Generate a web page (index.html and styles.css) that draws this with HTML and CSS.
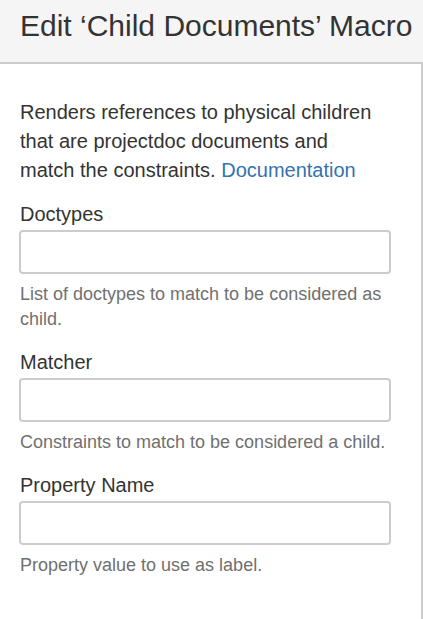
FILE: index.html
```html
<!DOCTYPE html>
<html>
<head>
<meta charset="utf-8">
<link rel="stylesheet" href="styles.css">
</head>
<body>
<div class="dialog">
  <header class="header">Edit ‘Child Documents’ Macro</header>
  <main class="content">
    <p class="intro">Renders references to physical children that are projectdoc documents and match the constraints. <a class="link" href="#">Documentation</a></p>
    <div class="field">
      <label class="label">Doctypes</label>
      <input class="input" type="text">
      <div class="help">List of doctypes to match to be considered as child.</div>
    </div>
    <div class="field">
      <label class="label">Matcher</label>
      <input class="input" type="text">
      <div class="help">Constraints to match to be considered a child.</div>
    </div>
    <div class="field">
      <label class="label">Property Name</label>
      <input class="input" type="text">
      <div class="help">Property value to use as label.</div>
    </div>
  </main>
</div>
</body>
</html>
```
FILE: styles.css
```css
html, body {
  margin: 0;
  padding: 0;
  background: #ffffff;
}
body {
  font-family: "Liberation Sans", Arial, sans-serif;
  color: #333333;
}
.dialog {
  width: 423px;
  height: 619px;
  display: flex;
  flex-direction: column;
  overflow: hidden;
}
.header {
  height: 64px;
  box-sizing: border-box;
  padding: 0 20px 12px;
  line-height: 52px;
  font-size: 30px;
  background: #f5f5f5;
  border-bottom: 2px solid #cccccc;
  white-space: nowrap;
  color: #333333;
}
.content {
  flex: 1;
  width: 423px;
  box-sizing: border-box;
  border-right: 2px solid #cccccc;
  padding: 34px 0 0 19px;
}
.intro {
  margin: 0 0 0 1px;
  font-size: 20px;
  line-height: 29px;
  width: 362px;
}
.link {
  color: #3572b0;
  text-decoration: none;
}
.field {
  display: flex;
  flex-direction: column;
  margin-top: 16px;
  width: 372px;
}
.field + .field {
  margin-top: 17px;
}
.label {
  font-size: 20px;
  line-height: 26px;
  margin: 0 0 3px 1px;
}
.input {
  box-sizing: border-box;
  width: 372px;
  height: 44px;
  margin: 0;
  border: 2px solid #cccccc;
  border-radius: 4px;
  background: #ffffff;
  outline: none;
}
.help {
  margin: 8px 0 0 1px;
  font-size: 18px;
  line-height: 25px;
  color: #707070;
}
```
